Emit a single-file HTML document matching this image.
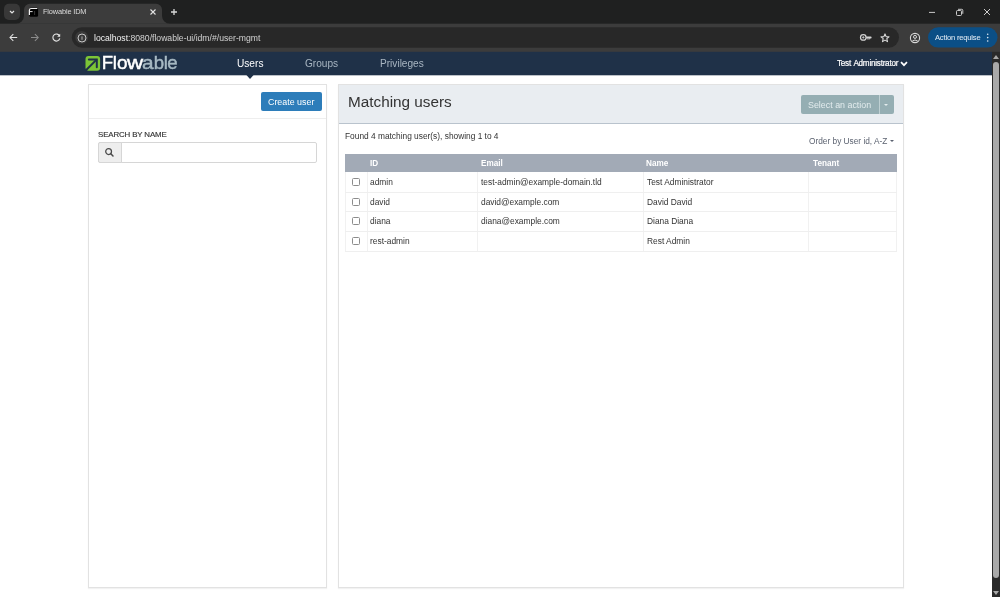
<!DOCTYPE html>
<html><head><meta charset="utf-8">
<style>
*{box-sizing:border-box;margin:0;padding:0}
html,body{width:1000px;height:597px;overflow:hidden;background:#fff;font-family:"Liberation Sans",sans-serif;position:relative}
.abs{position:absolute}
.t{position:absolute;white-space:nowrap;line-height:1}
body>*{will-change:transform}
/* chrome */
/* page */
.panel{background:#fff;border:1px solid #e2e2e2;box-shadow:0 1px 1px rgba(0,0,0,.05)}
.cell{position:absolute;font-size:8.4px;margin-top:0.8px;color:#333;line-height:1}
.th{position:absolute;font-size:8.2px;margin-top:1px;font-weight:bold;color:#fff;line-height:1}
.cb{position:absolute;width:8px;height:8px;border:1px solid #8c8c8c;border-radius:1.5px;background:#fff}
.hl{position:absolute;height:1px;background:#efefef}
.vl{position:absolute;width:1px;background:#f1f1f1}
</style></head>
<body>
<svg class="abs" style="left:0;top:0" width="1000" height="597" viewBox="0 0 1000 597">
<rect x="0" y="0" width="1000" height="52" fill="#1f2020"/>
<rect x="0" y="23.7" width="1000" height="28.3" fill="#3c3c3c"/>
<rect x="4" y="3.8" width="16" height="16.2" rx="5" fill="#383838"/>
<path d="M16 23.8 A8 8 0 0 0 24 15.8 V9.8 A6 6 0 0 1 30 3.8 H156 A6 6 0 0 1 162 9.8 V15.8 A8 8 0 0 0 170 23.8 Z" fill="#3c3c3c"/>
<rect x="71.8" y="27.3" width="827.2" height="20.4" rx="10.2" fill="#282828"/>
<circle cx="81.7" cy="37.4" r="6.4" fill="#3a3a3a"/>
<rect x="928" y="27.3" width="69.5" height="20.3" rx="10.15" fill="#0b4f86"/>
<rect x="0" y="51.8" width="992" height="23.5" fill="#1f3148"/>
<rect x="992" y="51.8" width="8" height="546" fill="#2a2a2a"/>
</svg>
<svg class="abs" style="left:8px;top:8px" width="8" height="8" viewBox="0 0 8 8"><path d="M2 3 L4 5 L6 3" stroke="#e3e3e3" stroke-width="1.2" fill="none"/></svg>
<!-- favicon -->
<svg class="abs" style="left:27px;top:6px" width="13" height="13" viewBox="0 0 13 13"><rect x="2.3" y="1.8" width="8.8" height="9" rx="1.3" fill="#000"/><path d="M2.4 9 V4.2 Q2.4 2.5 4.1 2.5 H10.3" stroke="#f0f0f0" stroke-width="1.2" fill="none"/><path d="M3 5.6 H5.6" stroke="#e0e0e0" stroke-width="1"/><path d="M7.6 5 V9" stroke="#444" stroke-width="0.8"/></svg>
<div class="t" style="left:43px;top:8.3px;font-size:7.4px;color:#dcdcdc;letter-spacing:-0.15px">Flowable IDM</div>
<svg class="abs" style="left:148.5px;top:8.6px" width="8" height="6" viewBox="0 0 8 6"><path d="M1.5 0.5 L6.5 5.5 M6.5 0.5 L1.5 5.5" stroke="#e3e3e3" stroke-width="1.1"/></svg>
<svg class="abs" style="left:170px;top:8px" width="8" height="8" viewBox="0 0 8 8"><path d="M4 1 V7 M1 4 H7" stroke="#d8d8d8" stroke-width="1.3"/></svg>
<!-- window controls -->
<svg class="abs" style="left:928px;top:8px" width="8" height="8" viewBox="0 0 8 8"><path d="M1 4.4 H7" stroke="#dcdcdc" stroke-width="0.9"/></svg>
<svg class="abs" style="left:955px;top:8px" width="9" height="8" viewBox="0 0 9 8"><rect x="1.5" y="2.5" width="5" height="5" rx="1" stroke="#dcdcdc" stroke-width="0.9" fill="none"/><path d="M3 1.3 H6.7 Q7.8 1.3 7.8 2.4 V5.8" stroke="#dcdcdc" stroke-width="0.9" fill="none"/></svg>
<svg class="abs" style="left:983px;top:8px" width="8" height="8" viewBox="0 0 8 8"><path d="M1 1 L7 7 M7 1 L1 7" stroke="#e0e0e0" stroke-width="0.9"/></svg>
<!-- toolbar icons -->
<svg class="abs" style="left:8px;top:32px" width="11" height="11" viewBox="0 0 11 11"><path d="M9.2 5.5 H2 M5.3 2.2 L2 5.5 L5.3 8.8" stroke="#e3e3e3" stroke-width="1.05" fill="none"/></svg>
<svg class="abs" style="left:29px;top:32px" width="11" height="11" viewBox="0 0 11 11"><path d="M2 5.5 H9.2 M5.9 2.2 L9.2 5.5 L5.9 8.8" stroke="#8c8c8c" stroke-width="1.05" fill="none"/></svg>
<svg class="abs" style="left:51px;top:32px" width="11" height="11" viewBox="0 0 11 11"><path d="M8.6 4.1 A3.5 3.5 0 1 0 8.8 6.4" stroke="#e3e3e3" stroke-width="1.15" fill="none"/><path d="M6.2 4.7 H9.2 V1.7 Z" fill="#e3e3e3"/></svg>
<svg class="abs" style="left:76.7px;top:32.6px" width="10" height="10" viewBox="0 0 10 10"><circle cx="5" cy="5" r="4" stroke="#d8d8d8" stroke-width="0.9" fill="none"/><path d="M5 3.4 V6.8" stroke="#bdbdbd" stroke-width="0.9"/></svg>
<div class="t" style="left:93.7px;top:34px;font-size:8.65px;color:#d2d2d2"><span style="color:#f2f2f2">localhost</span>:8080/flowable-ui/idm/#/user-mgmt</div>
<svg class="abs" style="left:859px;top:32px" width="14" height="11" viewBox="0 0 14 11"><circle cx="4.3" cy="5.4" r="2.8" stroke="#d4d4d4" stroke-width="1.25" fill="none"/><path d="M4.3 4.2 V6.6 M3.1 5.4 H5.5" stroke="#d4d4d4" stroke-width="0.8"/><path d="M7.2 4.5 H11.6 A1 1 0 0 1 11.6 6.5 H7.2 Z" fill="#d4d4d4"/><path d="M9 6.3 V7.6 M10.6 6.3 V7.3" stroke="#d4d4d4" stroke-width="1"/></svg>
<svg class="abs" style="left:880px;top:32.5px" width="10" height="10" viewBox="0 0 10 10"><path d="M5 0.9 L6.1 3.6 L9 3.8 L6.8 5.7 L7.5 8.6 L5 7.1 L2.5 8.6 L3.2 5.7 L1 3.8 L3.9 3.6 Z" stroke="#d8d8d8" stroke-width="1.1" fill="none" stroke-linejoin="round"/></svg>
<svg class="abs" style="left:909px;top:32px" width="12" height="12" viewBox="0 0 12 12"><circle cx="6" cy="6" r="4.6" stroke="#d8d8d8" stroke-width="1.1" fill="none"/><circle cx="6" cy="4.9" r="1.5" stroke="#d8d8d8" stroke-width="1" fill="none"/><path d="M3.3 9 Q6 7 8.7 9" stroke="#d8d8d8" stroke-width="1" fill="none"/></svg>
<div class="t" style="left:935px;top:33.6px;font-size:7.55px;color:#dde8f2;letter-spacing:-0.17px;-webkit-text-stroke:0.05px #dde8f2">Action requise</div>
<svg class="abs" style="left:986px;top:31px" width="4" height="13" viewBox="0 0 4 13"><circle cx="1.7" cy="3.2" r="0.8" fill="#dde8f2"/><circle cx="1.7" cy="6.6" r="0.8" fill="#dde8f2"/><circle cx="1.7" cy="10" r="0.8" fill="#dde8f2"/></svg>

<!-- navbar -->
<svg class="abs" style="left:85px;top:55px" width="16" height="17" viewBox="0 0 16 17">
  <rect x="0.5" y="1" width="14.6" height="14.8" rx="3" fill="#7cc537"/>
  <path d="M3.9 3.5 H12.8 V12.3 A1 1 0 0 1 10.8 12.3 V5.6 H3.9 A1.05 1.05 0 0 1 3.9 3.5 Z" fill="#1f3148"/>
  <path d="M11.8 4.4 L-0.5 16.7" stroke="#1f3148" stroke-width="2"/>
</svg>
<div class="abs" style="left:0;top:53.5px;font-size:18.6px;line-height:1;white-space:nowrap"><span class="t" style="left:101.7px;top:0;color:#fff;-webkit-text-stroke:0.45px #fff">F</span><span class="t" style="left:112.7px;top:0;color:#fff;-webkit-text-stroke:0.45px #fff">l</span><span class="t" style="left:116.7px;top:0;color:#fff;-webkit-text-stroke:0.45px #fff;transform:scaleX(1.02);transform-origin:0 0">o</span><span class="t" style="left:126.9px;top:0;color:#fff;-webkit-text-stroke:0.45px #fff;transform:scaleX(1.2);transform-origin:0 0">w</span><span class="t" style="left:142.3px;top:0;color:#a7b9c3;-webkit-text-stroke:0.45px #a7b9c3;transform:scaleX(1.12);transform-origin:0 0">a</span><span class="t" style="left:153.8px;top:0;color:#a7b9c3;-webkit-text-stroke:0.45px #a7b9c3">b</span><span class="t" style="left:163.7px;top:0;color:#a7b9c3;-webkit-text-stroke:0.45px #a7b9c3">l</span><span class="t" style="left:167.3px;top:0;color:#a7b9c3;-webkit-text-stroke:0.45px #a7b9c3">e</span></div>
<div class="t" style="left:237px;top:59px;font-size:10.15px;color:#fff">Users</div>
<svg class="abs" style="left:244px;top:74px" width="12" height="6" viewBox="0 0 12 6"><path d="M2.2 0.8 H9.8 L6 5.1 Z" fill="#1f3148"/></svg>
<div class="t" style="left:305px;top:59px;font-size:10.1px;color:#a9b6c2">Groups</div>
<div class="t" style="left:379.5px;top:59px;font-size:10.1px;color:#a9b6c2">Privileges</div>
<div class="t" style="left:837.2px;top:60px;font-size:8.15px;color:#fff;letter-spacing:-0.24px;word-spacing:0.9px;-webkit-text-stroke:0.2px #fff">Test Administrator</div>
<svg class="abs" style="left:900.3px;top:60.5px" width="8" height="6" viewBox="0 0 8 6"><path d="M1 1.2 L4 4.2 L7 1.2" stroke="#fff" stroke-width="1.7" fill="none"/></svg>
<div class="abs" style="left:993px;top:62px;width:6px;height:516px;background:#a9a9a9;border-radius:3px"></div>
<div class="abs" style="left:993px;top:54.8px;width:0;height:0;border-left:3px solid transparent;border-right:3px solid transparent;border-bottom:4px solid #a8a8a8"></div>
<div class="abs" style="left:993px;top:590.6px;width:0;height:0;border-left:3px solid transparent;border-right:3px solid transparent;border-top:4px solid #a8a8a8"></div>

<!-- left panel -->
<div class="abs panel" style="left:88px;top:84px;width:239px;height:504px"></div>
<div class="hl" style="left:89px;top:118px;width:237px;background:#eeeeee"></div>
<div class="abs" style="left:261px;top:92px;width:61px;height:19px;background:#2d7dba;border-radius:2px"></div>
<div class="t" style="left:268.3px;top:97.5px;font-size:8.9px;color:#fff">Create user</div>
<div class="t" style="left:97.6px;top:130.9px;font-size:7.9px;letter-spacing:-0.13px;color:#333;-webkit-text-stroke:0.15px #333">SEARCH BY NAME</div>
<div class="abs" style="left:98px;top:142px;width:219px;height:21px;border:1px solid #d6d6d6;border-radius:2px;background:#fff"></div>
<div class="abs" style="left:98px;top:142px;width:24px;height:21px;border:1px solid #d6d6d6;border-radius:2px 0 0 2px;background:#eeeeee"></div>
<svg class="abs" style="left:104px;top:147px" width="11" height="11" viewBox="0 0 11 11"><circle cx="4.6" cy="4.6" r="2.9" stroke="#4a4a4a" stroke-width="1.25" fill="none"/><path d="M6.8 6.8 L9 9" stroke="#4a4a4a" stroke-width="1.5" stroke-linecap="round"/></svg>

<!-- right panel -->
<div class="abs panel" style="left:338px;top:84px;width:566px;height:504px"></div>
<div class="abs" style="left:339px;top:85px;width:564px;height:39px;background:#e9edf1;border-bottom:1px solid #b9c3cd"></div>
<div class="t" style="left:347.5px;top:94px;font-size:15.3px;color:#333">Matching users</div>
<div class="abs" style="left:801px;top:95px;width:93px;height:19px;background:#95aeb3;border-radius:2px"></div>
<div class="abs" style="left:879px;top:95px;width:1px;height:19px;background:#bfd0d3"></div>
<div class="t" style="left:808px;top:100.7px;font-size:8.9px;color:#e3ecee">Select an action</div>
<div class="abs" style="left:884px;top:104px;width:0;height:0;border-left:2.5px solid transparent;border-right:2.5px solid transparent;border-top:2.5px solid #e3ecee"></div>

<div class="t" style="left:344.8px;top:131.8px;font-size:8.35px;color:#333">Found 4 matching user(s), showing 1 to 4</div>
<div class="t" style="left:808.5px;top:137.1px;font-size:8.3px;color:#5b6270">Order by User id, A-Z</div>
<div class="abs" style="left:889.5px;top:140px;width:0;height:0;border-left:2.5px solid transparent;border-right:2.5px solid transparent;border-top:2.5px solid #5b6270"></div>

<!-- table -->
<div class="abs" style="left:345px;top:154px;width:552px;height:18px;background:#a2aab6"></div>
<div class="th" style="left:370px;top:158.5px">ID</div>
<div class="th" style="left:481px;top:158.5px">Email</div>
<div class="th" style="left:646.3px;top:158.5px">Name</div>
<div class="th" style="left:812.6px;top:158.5px">Tenant</div>
<div class="vl" style="left:345px;top:172px;height:79px"></div>
<div class="vl" style="left:367px;top:172px;height:79px"></div>
<div class="vl" style="left:477px;top:172px;height:79px"></div>
<div class="vl" style="left:643px;top:172px;height:79px"></div>
<div class="vl" style="left:808px;top:172px;height:79px"></div>
<div class="vl" style="left:896px;top:172px;height:79px"></div>
<div class="hl" style="left:345px;top:191.5px;width:552px"></div>
<div class="hl" style="left:345px;top:211px;width:552px"></div>
<div class="hl" style="left:345px;top:231px;width:552px"></div>
<div class="hl" style="left:345px;top:250.5px;width:552px"></div>

<div class="cb" style="left:352px;top:178px"></div>
<div class="cell" style="left:370px;top:177.5px">admin</div>
<div class="cell" style="left:481px;top:177.5px">test-admin@example-domain.tld</div>
<div class="cell" style="left:646.5px;top:177.5px">Test Administrator</div>

<div class="cb" style="left:352px;top:197.5px"></div>
<div class="cell" style="left:370px;top:197px">david</div>
<div class="cell" style="left:481px;top:197px">david@example.com</div>
<div class="cell" style="left:646.5px;top:197px">David David</div>

<div class="cb" style="left:352px;top:217px"></div>
<div class="cell" style="left:370px;top:216.7px">diana</div>
<div class="cell" style="left:481px;top:216.7px">diana@example.com</div>
<div class="cell" style="left:646.5px;top:216.7px">Diana Diana</div>

<div class="cb" style="left:352px;top:236.5px"></div>
<div class="cell" style="left:370px;top:236.3px">rest-admin</div>
<div class="cell" style="left:646.5px;top:236.3px">Rest Admin</div>
</body></html>
